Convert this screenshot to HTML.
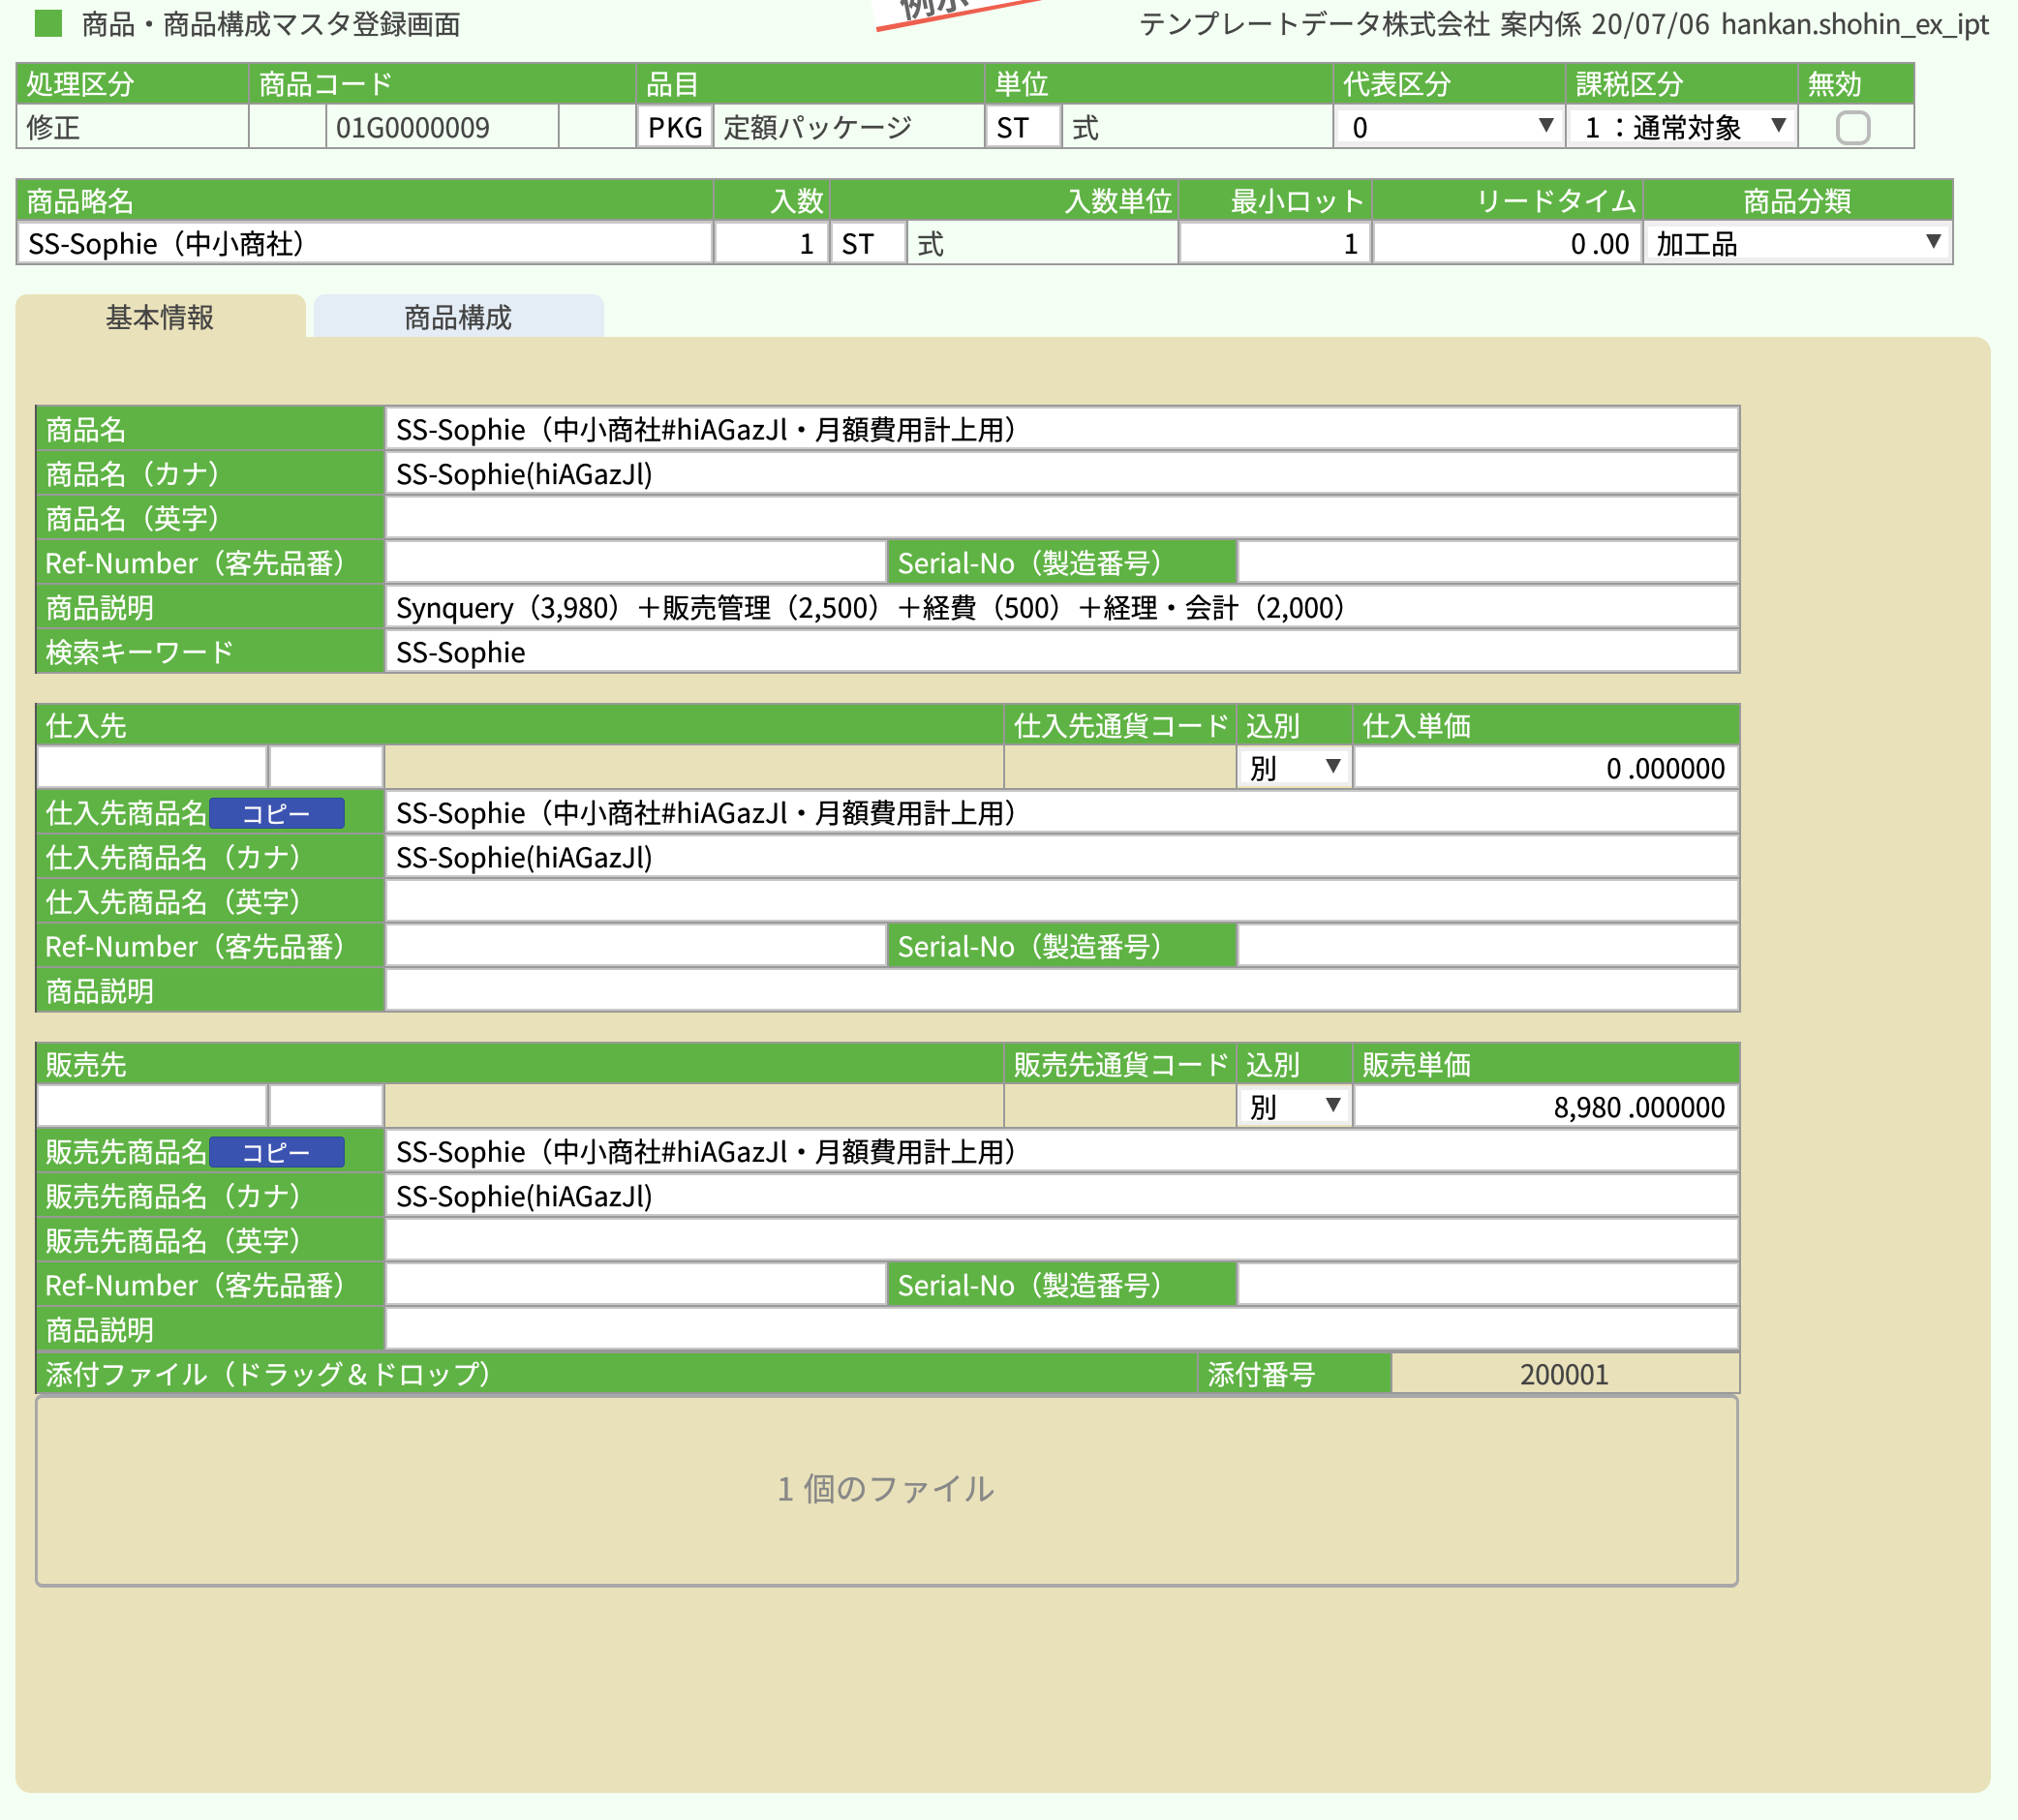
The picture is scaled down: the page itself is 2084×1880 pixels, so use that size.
<!DOCTYPE html>
<html lang="ja"><head><meta charset="utf-8"><title>商品・商品構成マスタ登録画面</title>
<style>
html,body{margin:0;padding:0}
body{width:2084px;height:1880px;background:#f3fff2;position:relative;overflow:hidden;font-family:"Noto Sans CJK JP","Liberation Sans",sans-serif;font-size:28px;color:#444;-webkit-text-stroke:.3px}
div{position:absolute;box-sizing:border-box;white-space:nowrap}
.f{background:#999}
.g{background:#5fb344;color:#fff;padding-left:9px}
.p{background:#f3fff2;color:#444;padding-left:9px}
.i{background:#fff;border:2px solid #c8c8c8;color:#000;padding-left:9px}
.b{background:#e9e1ba;color:#444}
.s{background:#eee;color:#000}
.w{background:#fff;color:#000}
.ar{width:0;height:0;border-left:8px solid transparent;border-right:8px solid transparent;border-top:15px solid #444}
.r{text-align:right;padding-right:5px;padding-left:0}
.z{letter-spacing:.33px}
</style></head><body>

<div style="left:36px;top:10px;width:28px;height:28px;background:#5fb344"></div>
<div style="left:84px;top:3px;height:42px;line-height:42px;color:#444">商品・商品構成マスタ登録画面</div>
<svg style="position:absolute;left:0;top:0" width="2084" height="40"><polygon points="899,0 905,30 1077,0" fill="#fff"/><polygon points="904.7,28 1056.7,0 1076.7,0 905.7,33.3" fill="#ee5f4e"/><text x="932" y="19" transform="rotate(-10.7 932 19)" font-size="36" font-weight="700" fill="#666" font-family="Noto Sans CJK JP,sans-serif">例示</text></svg>
<div style="right:30px;top:3px;height:42px;line-height:42px;color:#444;word-spacing:4px">テンプレートデータ株式会社 案内係 <span style="letter-spacing:1px">20/07/06</span> <span style="letter-spacing:-.66px">hankan.shohin_ex_ipt</span></div>

<!-- table 1 -->
<div class="f" style="left:16px;top:64px;width:1962px;height:90px"></div>
<div class="g" style="left:18px;top:66px;width:238px;height:40px;line-height:41px">処理区分</div>
<div class="g" style="left:258px;top:66px;width:398px;height:40px;line-height:41px">商品コード</div>
<div class="g" style="left:658px;top:66px;width:358px;height:40px;line-height:41px">品目</div>
<div class="g" style="left:1018px;top:66px;width:358px;height:40px;line-height:41px">単位</div>
<div class="g" style="left:1378px;top:66px;width:238px;height:40px;line-height:41px">代表区分</div>
<div class="g" style="left:1618px;top:66px;width:238px;height:40px;line-height:41px">課税区分</div>
<div class="g" style="left:1858px;top:66px;width:118px;height:40px;line-height:41px">無効</div>

<div class="p" style="left:18px;top:108px;width:238px;height:44px;line-height:47px">修正</div>
<div class="p" style="left:258px;top:108px;width:78px;height:44px"></div>
<div class="p" style="left:338px;top:108px;width:238px;height:44px;line-height:47px">01G0000009</div>
<div class="p" style="left:578px;top:108px;width:78px;height:44px"></div>
<div class="i" style="left:658px;top:108px;width:78px;height:44px;line-height:43px;letter-spacing:1.3px">PKG</div>
<div class="p" style="left:738px;top:108px;width:278px;height:44px;line-height:47px">定額パッケージ</div>
<div class="i" style="left:1018px;top:108px;width:78px;height:44px;line-height:43px;letter-spacing:1.3px">ST</div>
<div class="p" style="left:1098px;top:108px;width:278px;height:44px;line-height:47px">式</div>
<div class="s" style="left:1378px;top:108px;width:238px;height:44px"></div>
<div class="w" style="left:1382px;top:114px;width:231px;height:32px;line-height:35px;padding-left:15px">0</div>
<div class="ar" style="left:1589px;top:122px"></div>
<div class="s" style="left:1618px;top:108px;width:238px;height:44px"></div>
<div class="w" style="left:1622px;top:114px;width:231px;height:32px;line-height:35px;padding-left:15px">1 ：通常対象</div>
<div class="ar" style="left:1829px;top:122px"></div>
<div class="p" style="left:1858px;top:108px;width:118px;height:44px"></div>
<div style="left:1896px;top:114px;width:36px;height:36px;border:4px solid #bbb;border-radius:11px"></div>

<!-- table 2 -->
<div class="f" style="left:16px;top:184px;width:2002px;height:90px"></div>
<div class="g" style="left:18px;top:186px;width:718px;height:40px;line-height:43px">商品略名</div>
<div class="g r" style="left:738px;top:186px;width:118px;height:40px;line-height:43px">入数</div>
<div class="g r" style="left:858px;top:186px;width:358px;height:40px;line-height:43px">入数単位</div>
<div class="g r" style="left:1218px;top:186px;width:198px;height:40px;line-height:43px">最小ロット</div>
<div class="g r" style="left:1418px;top:186px;width:278px;height:40px;line-height:43px">リードタイム</div>
<div class="g" style="left:1698px;top:186px;width:318px;height:40px;line-height:43px;text-align:center;padding:0 2px 0 0">商品分類</div>

<div class="i" style="left:18px;top:228px;width:718px;height:44px;line-height:41px;border-top-width:3px">SS-Sophie（中小商社）</div>
<div class="i" style="left:738px;top:228px;width:118px;height:44px;line-height:41px;border-top-width:3px;text-align:right;padding:0 13px 0 0">1</div>
<div class="i" style="left:858px;top:228px;width:78px;height:44px;line-height:41px;border-top-width:3px;letter-spacing:1.3px">ST</div>
<div class="p" style="left:938px;top:228px;width:278px;height:44px;line-height:47px">式</div>
<div class="i" style="left:1218px;top:228px;width:198px;height:44px;line-height:41px;border-top-width:3px;text-align:right;padding:0 11px 0 0">1</div>
<div class="i" style="left:1418px;top:228px;width:278px;height:44px;line-height:41px;border-top-width:3px;text-align:right;padding:0 11px 0 0">0 .00</div>
<div class="s" style="left:1698px;top:228px;width:318px;height:44px"></div>
<div class="w" style="left:1702px;top:234px;width:310px;height:32px;line-height:35px;padding-left:9px">加工品</div>
<div class="ar" style="left:1989px;top:242px"></div>

<!-- tabs + panel -->
<div class="b" style="left:16px;top:304px;width:300px;height:46px;border-radius:12px 12px 0 0;text-align:center;line-height:46px;padding-right:2px">基本情報</div>
<div style="left:324px;top:304px;width:300px;height:44px;background:#e4ecf5;border-radius:12px 12px 0 0;text-align:center;line-height:46px;color:#444;padding-right:2px">商品構成</div>
<div class="b" style="left:16px;top:348px;width:2040px;height:1504px;border-radius:0 16px 16px 16px"></div>

<!-- block A -->
<div class="f" style="left:36px;top:418px;width:1762px;height:278px"></div>
<div style="left:36px;top:418px;width:2px;height:278px;background:#555"></div>
<div class="g" style="left:38px;top:420px;width:358px;height:44px;line-height:47px">商品名</div>
<div class="i" style="left:398px;top:420px;width:1398px;height:44px;line-height:43px">SS-Sophie（中小商社#<span class="z">hiAGazJl</span>・月額費用計上用）</div>
<div class="g" style="left:38px;top:466px;width:358px;height:44px;line-height:47px">商品名（カナ）</div>
<div class="i" style="left:398px;top:466px;width:1398px;height:44px;line-height:43px">SS-Sophie(hiAGazJl)</div>
<div class="g" style="left:38px;top:512px;width:358px;height:44px;line-height:47px">商品名（英字）</div>
<div class="i" style="left:398px;top:512px;width:1398px;height:44px"></div>
<div class="g" style="left:38px;top:558px;width:358px;height:44px;line-height:47px;padding-left:8px">Ref-Number（客先品番）</div>
<div class="i" style="left:398px;top:558px;width:518px;height:44px"></div>
<div class="g" style="left:918px;top:558px;width:358px;height:44px;line-height:47px">Serial-No（製造番号）</div>
<div class="i" style="left:1278px;top:558px;width:518px;height:44px"></div>
<div class="g" style="left:38px;top:604px;width:358px;height:44px;line-height:47px">商品説明</div>
<div class="i" style="left:398px;top:604px;width:1398px;height:44px;line-height:43px"><span style="letter-spacing:-.4px">Synquery</span>（3,980）＋販売管理<span style="letter-spacing:.4px">（2,500）</span>＋経費（500）＋経理・会計（2,000）</div>
<div class="g" style="left:38px;top:650px;width:358px;height:44px;line-height:47px">検索キーワード</div>
<div class="i" style="left:398px;top:650px;width:1398px;height:44px;line-height:43px">SS-Sophie</div>

<!-- block B -->
<div class="f" style="left:36px;top:726px;width:1762px;height:320px"></div>
<div style="left:36px;top:726px;width:2px;height:320px;background:#555"></div>
<div class="g" style="left:38px;top:728px;width:998px;height:40px;line-height:43px">仕入先</div>
<div class="g" style="left:1038px;top:728px;width:238px;height:40px;line-height:43px">仕入先通貨コード</div>
<div class="g" style="left:1278px;top:728px;width:118px;height:40px;line-height:43px">込別</div>
<div class="g" style="left:1398px;top:728px;width:398px;height:40px;line-height:43px">仕入単価</div>
<div class="i" style="left:38px;top:770px;width:238px;height:44px"></div>
<div class="i" style="left:278px;top:770px;width:118px;height:44px"></div>
<div class="b" style="left:398px;top:770px;width:638px;height:44px"></div>
<div class="b" style="left:1038px;top:770px;width:238px;height:44px"></div>
<div class="b" style="left:1278px;top:770px;width:118px;height:44px"></div>
<div class="s" style="left:1278px;top:772px;width:118px;height:40px"></div>
<div class="w" style="left:1282px;top:776px;width:110px;height:32px;line-height:34px;padding-left:9px">別</div>
<div class="ar" style="left:1369px;top:784px"></div>
<div class="i" style="left:1398px;top:770px;width:398px;height:44px;line-height:43px;text-align:right;padding:0 12px 0 0">0 .000000</div>
<div class="g" style="left:38px;top:816px;width:358px;height:44px;line-height:47px">仕入先商品名</div>
<div style="left:216px;top:824px;width:140px;height:32px;background:#3b53b0;border:1px solid #2a4a96;border-radius:4px;color:#fff;font-size:24px;line-height:30px;text-align:center;padding-right:2px">コピー</div>
<div class="i" style="left:398px;top:816px;width:1398px;height:44px;line-height:43px">SS-Sophie（中小商社#<span class="z">hiAGazJl</span>・月額費用計上用）</div>
<div class="g" style="left:38px;top:862px;width:358px;height:44px;line-height:47px">仕入先商品名（カナ）</div>
<div class="i" style="left:398px;top:862px;width:1398px;height:44px;line-height:43px">SS-Sophie(hiAGazJl)</div>
<div class="g" style="left:38px;top:908px;width:358px;height:44px;line-height:47px">仕入先商品名（英字）</div>
<div class="i" style="left:398px;top:908px;width:1398px;height:44px"></div>
<div class="g" style="left:38px;top:954px;width:358px;height:44px;line-height:47px;padding-left:8px">Ref-Number（客先品番）</div>
<div class="i" style="left:398px;top:954px;width:518px;height:44px"></div>
<div class="g" style="left:918px;top:954px;width:358px;height:44px;line-height:47px">Serial-No（製造番号）</div>
<div class="i" style="left:1278px;top:954px;width:518px;height:44px"></div>
<div class="g" style="left:38px;top:1000px;width:358px;height:44px;line-height:47px">商品説明</div>
<div class="i" style="left:398px;top:1000px;width:1398px;height:44px"></div>

<!-- block C -->
<div class="f" style="left:36px;top:1076px;width:1762px;height:364px"></div>
<div style="left:36px;top:1076px;width:2px;height:364px;background:#555"></div>
<div class="g" style="left:38px;top:1078px;width:998px;height:40px;line-height:43px">販売先</div>
<div class="g" style="left:1038px;top:1078px;width:238px;height:40px;line-height:43px">販売先通貨コード</div>
<div class="g" style="left:1278px;top:1078px;width:118px;height:40px;line-height:43px">込別</div>
<div class="g" style="left:1398px;top:1078px;width:398px;height:40px;line-height:43px">販売単価</div>
<div class="i" style="left:38px;top:1120px;width:238px;height:44px"></div>
<div class="i" style="left:278px;top:1120px;width:118px;height:44px"></div>
<div class="b" style="left:398px;top:1120px;width:638px;height:44px"></div>
<div class="b" style="left:1038px;top:1120px;width:238px;height:44px"></div>
<div class="b" style="left:1278px;top:1120px;width:118px;height:44px"></div>
<div class="s" style="left:1278px;top:1122px;width:118px;height:40px"></div>
<div class="w" style="left:1282px;top:1126px;width:110px;height:32px;line-height:34px;padding-left:9px">別</div>
<div class="ar" style="left:1369px;top:1134px"></div>
<div class="i" style="left:1398px;top:1120px;width:398px;height:44px;line-height:43px;text-align:right;padding:0 12px 0 0">8,980 .000000</div>
<div class="g" style="left:38px;top:1166px;width:358px;height:44px;line-height:47px">販売先商品名</div>
<div style="left:216px;top:1174px;width:140px;height:32px;background:#3b53b0;border:1px solid #2a4a96;border-radius:4px;color:#fff;font-size:24px;line-height:30px;text-align:center;padding-right:2px">コピー</div>
<div class="i" style="left:398px;top:1166px;width:1398px;height:44px;line-height:43px">SS-Sophie（中小商社#<span class="z">hiAGazJl</span>・月額費用計上用）</div>
<div class="g" style="left:38px;top:1212px;width:358px;height:44px;line-height:47px">販売先商品名（カナ）</div>
<div class="i" style="left:398px;top:1212px;width:1398px;height:44px;line-height:43px">SS-Sophie(hiAGazJl)</div>
<div class="g" style="left:38px;top:1258px;width:358px;height:44px;line-height:47px">販売先商品名（英字）</div>
<div class="i" style="left:398px;top:1258px;width:1398px;height:44px"></div>
<div class="g" style="left:38px;top:1304px;width:358px;height:44px;line-height:47px;padding-left:8px">Ref-Number（客先品番）</div>
<div class="i" style="left:398px;top:1304px;width:518px;height:44px"></div>
<div class="g" style="left:918px;top:1304px;width:358px;height:44px;line-height:47px">Serial-No（製造番号）</div>
<div class="i" style="left:1278px;top:1304px;width:518px;height:44px"></div>
<div class="g" style="left:38px;top:1350px;width:358px;height:44px;line-height:47px">商品説明</div>
<div class="i" style="left:398px;top:1350px;width:1398px;height:44px"></div>
<div class="g" style="left:38px;top:1398px;width:1198px;height:40px;line-height:43px">添付ファイル（ドラッグ＆ドロップ）</div>
<div class="g" style="left:1238px;top:1398px;width:198px;height:40px;line-height:43px">添付番号</div>
<div class="b" style="left:1438px;top:1398px;width:358px;height:40px;line-height:43px;text-align:center;letter-spacing:-.2px;padding-right:2px">200001</div>

<div style="left:36px;top:1440px;width:1760px;height:200px;border:solid #a8a8a8;border-width:4px 3px;border-radius:8px;text-align:center;line-height:184px;color:#888;font-size:33px;word-spacing:2px;padding-right:2px">1 個のファイル</div>

</body></html>
